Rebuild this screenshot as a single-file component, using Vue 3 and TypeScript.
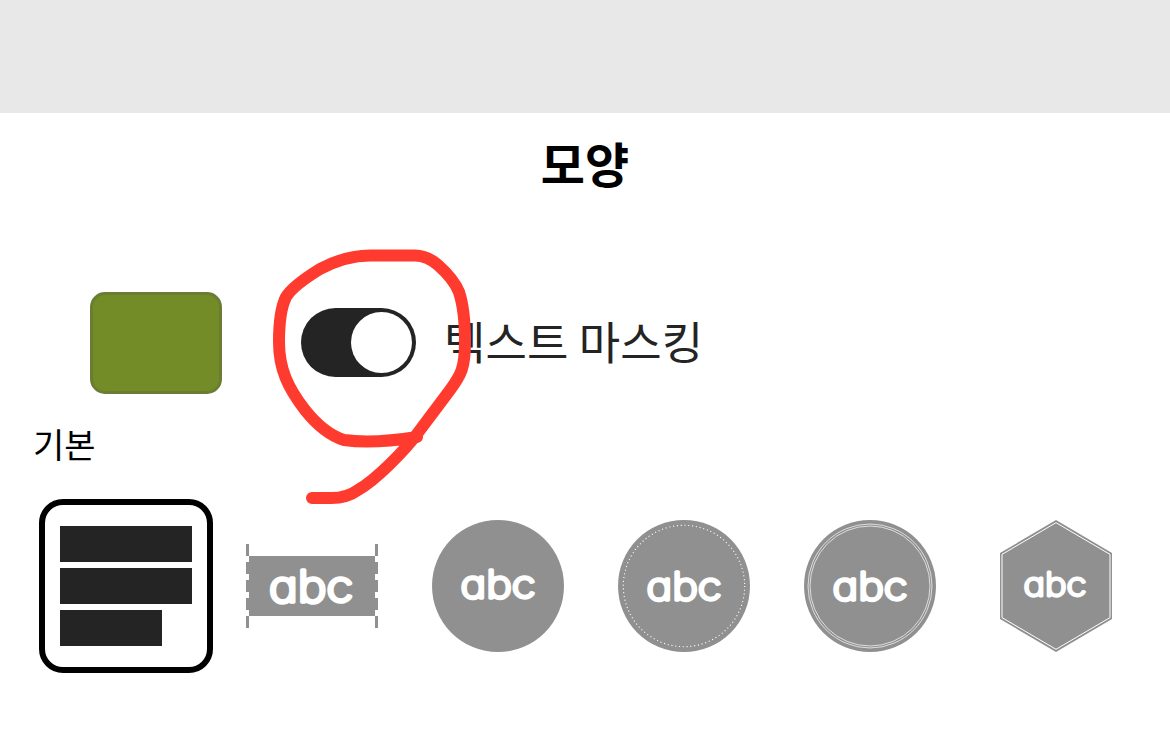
<script setup lang="ts">
import { ref } from 'vue'

type ShapeKind = 'lines' | 'label' | 'circle' | 'dotted' | 'ring' | 'hexagon'

interface Shape {
  kind: ShapeKind
  x: number
  y: number
  size: number
  length: number
}

const shapes: Shape[] = [
  { kind: 'lines', x: 0, y: 0, size: 0, length: 0 },
  { kind: 'label', x: 23, y: 82, size: 44, length: 84 },
  { kind: 'circle', x: 28.5, y: 77.5, size: 38.5, length: 75 },
  { kind: 'dotted', x: 28.5, y: 79.5, size: 38.5, length: 75 },
  { kind: 'ring', x: 28.5, y: 79.5, size: 38.5, length: 75 },
  { kind: 'hexagon', x: 33.5, y: 75.5, size: 32.5, length: 63 },
]

const selected = ref<ShapeKind>('lines')
const masking = ref(true)
</script>

<template>
  <main class="screen">
    <div class="canvas-area"></div>
    <h1 class="title">모양</h1>
    <section class="controls">
      <button class="swatch" aria-label="색상"></button>
      <button class="toggle" :class="{ on: masking }" role="switch" :aria-checked="masking" @click="masking = !masking">
        <span class="knob"></span>
      </button>
      <span class="toggle-label">텍스트 마스킹</span>
    </section>
    <h2 class="group">기본</h2>
    <section class="shapes">
      <button
        v-for="s in shapes"
        :key="s.kind"
        class="shape"
        :class="{ selected: selected === s.kind }"
        @click="selected = s.kind"
      >
        <svg width="132" height="132" viewBox="0 0 132 132">
          <g v-if="s.kind === 'lines'" fill="#242424">
            <rect y="6" width="132" height="36" />
            <rect y="48" width="132" height="36" />
            <rect y="90" width="102" height="36" />
          </g>
          <g v-else-if="s.kind === 'label'">
            <rect x="3" y="36" width="126" height="60" fill="#909090" />
            <path d="M1.5 24V108M130.5 24V108" stroke="#909090" stroke-width="3" stroke-dasharray="12 6" />
          </g>
          <circle v-else-if="s.kind !== 'hexagon'" cx="66" cy="66" r="66" fill="#909090" />
          <g v-else>
            <path d="M66 0L122 33V99L66 132L10 99V33Z" fill="#909090" />
            <path d="M66 2.7L120 34.4V97.6L66 129.3L12 97.6V34.4Z" fill="none" stroke="#fff" stroke-width="1" />
          </g>
          <circle v-if="s.kind === 'dotted'" cx="66" cy="66" r="60.7" fill="none" stroke="#fff" stroke-width="1.1" stroke-dasharray="1.1 2.714" />
          <g v-if="s.kind === 'ring'" fill="none" stroke="#fff" stroke-width=".7">
            <circle cx="66" cy="66" r="62" />
            <circle cx="66" cy="66" r="60" />
          </g>
          <text
            v-if="s.kind !== 'lines'"
            class="sample"
            :x="s.x"
            :y="s.y"
            :font-size="s.size"
            :stroke-width="s.size * 0.085"
            :textLength="s.length"
            lengthAdjust="spacingAndGlyphs"
          >abc</text>
        </svg>
      </button>
    </section>
    <svg class="ink" width="220" height="270" viewBox="260 240 220 270">
      <path d="M417 437C392 441 365 443 344 440C331 436 317 425 305 410C288 388 279 369 279 342C279 324 280 309 286 297C292 287 307 277 320 269C337 260 354 255.500 370 255.500H415C424 255.500 431 259 438 265C447 273 455 282 459 292C463 304 465 325 465 342C465 368 461 375 450 390L417 434C405 450 376 480 358 490C350 496 342 498 331 498H312" />
    </svg>
  </main>
</template>

<style>
body {
  margin: 0;
  background: #fff;
}
</style>

<style scoped>
.screen {
  position: relative;
  width: 1170px;
  height: 749px;
  overflow: hidden;
  background: #fff;
  font-family: "Noto Sans CJK KR", sans-serif;
  color: #000;
}
.canvas-area {
  height: 113px;
  background: #e8e8e8;
}
.title {
  margin: 0;
  height: 179px;
  padding-top: 14px;
  box-sizing: border-box;
  font-size: 48px;
  line-height: 70px;
  font-weight: 700;
  text-align: center;
}
.controls {
  display: flex;
  align-items: center;
  height: 102px;
  padding-left: 90px;
}
button {
  padding: 0;
  border: 0;
  background: none;
  flex: none;
}
.swatch {
  box-sizing: border-box;
  width: 132px;
  height: 102px;
  border: 3px solid #6b7d32;
  border-radius: 15px;
  background: #738c27;
}
.toggle {
  display: flex;
  align-items: center;
  box-sizing: border-box;
  width: 115px;
  height: 69px;
  margin: 0 28px 1px 79px;
  padding: 4px;
  border-radius: 35px;
  background: #242424;
}
.toggle.on {
  justify-content: flex-end;
}
.knob {
  width: 61px;
  height: 61px;
  border-radius: 50%;
  background: #fff;
}
.toggle-label {
  padding-bottom: 4px;
  font-size: 45px;
  line-height: 66px;
  letter-spacing: 0.1px;
  color: #242424;
}
.group {
  margin: 0;
  height: 126px;
  padding: 25px 0 0 33px;
  box-sizing: border-box;
  font-size: 34px;
  line-height: 50px;
  font-weight: 400;
}
.shapes {
  display: flex;
  gap: 54px;
  padding-left: 60px;
}
.shape {
  width: 132px;
  height: 132px;
}
.shape svg {
  display: block;
}
.shape.selected {
  box-sizing: border-box;
  width: 174px;
  height: 174px;
  margin: -21px;
  padding: 15px;
  border: 6px solid #000;
  border-radius: 24px;
}
.sample {
  fill: #fff;
  stroke: #fff;
  stroke-linejoin: round;
  font-family: Inter, sans-serif;
  font-weight: 200;
  font-feature-settings: "cv11" 1;
}
.ink {
  position: absolute;
  left: 260px;
  top: 240px;
  pointer-events: none;
}
.ink path {
  fill: none;
  stroke: #ff3b30;
  stroke-width: 12;
  stroke-linecap: round;
  stroke-linejoin: round;
}
</style>
